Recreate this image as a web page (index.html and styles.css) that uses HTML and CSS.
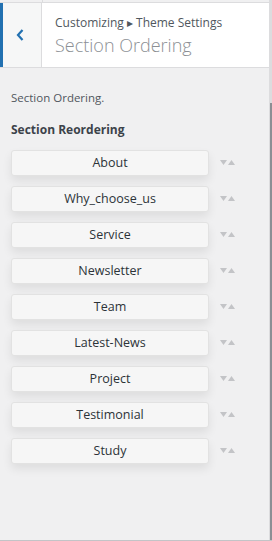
FILE: index.html
```html
<!DOCTYPE html>
<html lang="en">
<head>
    <meta charset="UTF-8">
    <meta name="viewport" content="width=device-width, initial-scale=1.0">
    <title>Section Ordering</title>
    <link rel="stylesheet" href="styles.css">
</head>
<body>
    <div class="frame">
        <div class="sidebar">
            <div class="top-strip"><span class="strip-sep"></span></div>
            <div class="header">
                <button type="button" class="back" aria-label="Back">
                    <svg width="8" height="12" viewBox="0 0 8 12"><path d="M6.5 1 L2 6 L6.5 11" fill="none" stroke="#2271b1" stroke-width="2.2"/></svg>
                </button>
                <div class="title">
                    <div class="crumb">Customizing &#9656; Theme Settings</div>
                    <div class="heading">Section Ordering</div>
                </div>
            </div>

            <div class="content">
                <p class="desc">Section Ordering.</p>
                <h3 class="label">Section Reordering</h3>
                <ul class="sections">
                    <li><span class="item">About</span><span class="arrows"></span></li>
                    <li><span class="item">Why_choose_us</span><span class="arrows"></span></li>
                    <li><span class="item">Service</span><span class="arrows"></span></li>
                    <li><span class="item">Newsletter</span><span class="arrows"></span></li>
                    <li><span class="item">Team</span><span class="arrows"></span></li>
                    <li><span class="item">Latest-News</span><span class="arrows"></span></li>
                    <li><span class="item">Project</span><span class="arrows"></span></li>
                    <li><span class="item">Testimonial</span><span class="arrows"></span></li>
                    <li><span class="item">Study</span><span class="arrows"></span></li>
                </ul>
            </div>
        </div>
        <div class="scrollbar"><span class="thumb"></span></div>
    </div>

    <script>
        // same little up/down arrows for every row
        const arrowSvg = '<svg width="16" height="6" viewBox="0 0 16 6">' +
            '<path d="M0 0 H7 L3.5 5 Z" fill="#c3c4c7"/>' +
            '<path d="M8 5 H15 L11.5 0 Z" fill="#c3c4c7"/></svg>';
        document.querySelectorAll('.arrows').forEach(el => {
            el.innerHTML = arrowSvg;
        });
    </script>
</body>
</html>
```

FILE: styles.css
```css
html, body {
    margin: 0;
    height: 100%;
}
body {
    font-family: 'Open Sans', 'Noto Sans', sans-serif;
    background-color: #f0f0f1;
    color: #3c434a;
}
.frame {
    display: flex;
    height: 540px;
    border-bottom: 1px solid #c3c4c7;
}
.sidebar {
    width: 269px;
    border-right: 1px solid #dcdcde;
    display: flex;
    flex-direction: column;
}
.top-strip {
    height: 2px;
    position: relative;
}
.strip-sep {
    position: absolute;
    left: 42px;
    top: 0;
    width: 1px;
    height: 2px;
    background: #dcdcde;
}
.header {
    display: flex;
    height: 64px;
    background: #fff;
    border-top: 1px solid #dcdcde;
    border-bottom: 1px solid #dcdcde;
}
.back {
    width: 42px;
    padding: 0;
    border: none;
    border-left: 3px solid #2271b1;
    border-right: 1px solid #dcdcde;
    background: #f6f7f7;
    display: flex;
    align-items: center;
    justify-content: center;
    padding-right: 4px;
}
.title {
    padding: 12px 0 0 13px;
}
.crumb {
    font-size: 12px;
    line-height: 16px;
    color: #50575e;
}
.heading {
    font-size: 18px;
    font-weight: 300;
    line-height: 26px;
    color: #8c8f94;
    margin-top: 1px;
}
.content {
    padding: 0 0 0 11px;
}
.desc {
    font-size: 11.5px;
    color: #50575e;
    margin: 22px 0 0;
    line-height: 16px;
}
.label {
    font-size: 12px;
    font-weight: 700;
    color: #3c434a;
    margin: 15px 0 0;
    line-height: 18px;
}
.sections {
    list-style: none;
    margin: 11px 0 0;
    padding: 0;
    display: flex;
    flex-direction: column;
    gap: 10px;
}
.sections li {
    display: flex;
    align-items: center;
}
.item {
    width: 196px;
    height: 24px;
    line-height: 24px;
    text-align: center;
    font-size: 12.5px;
    color: #2c3338;
    background: #f6f6f6;
    border: 1px solid #e2e2e2;
    border-radius: 3px;
    box-shadow: 0 5px 10px rgba(0, 0, 0, 0.08);
}
.arrows {
    display: flex;
    margin-left: 11px;
    margin-top: -1px;
}
.scrollbar {
    width: 2px;
    background: #dcdcde;
    display: flex;
    flex-direction: column;
}
.thumb {
    margin-top: 103px;
    flex: 1;
    background: #8c8f94;
}
```
